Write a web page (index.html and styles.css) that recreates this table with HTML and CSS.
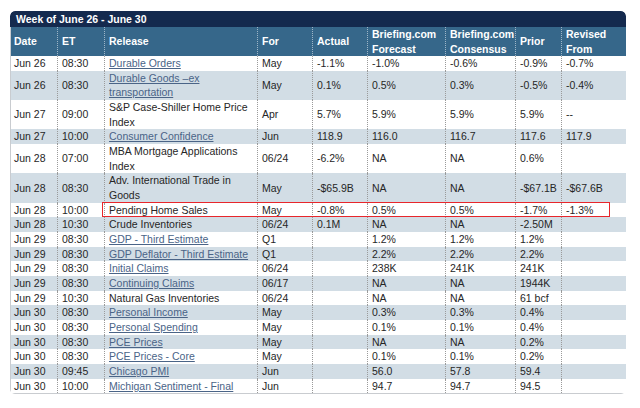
FILE: index.html
```html
<!DOCTYPE html>
<html>
<head>
<meta charset="utf-8">
<link rel="stylesheet" href="styles.css">
</head>
<body>
<div class="panel">
  <div class="title">Week of June 26 - June 30</div>
  <table class="cal">
    <colgroup>
      <col class="c-date"><col class="c-et"><col class="c-rel"><col class="c-for"><col class="c-act"><col class="c-fc"><col class="c-cons"><col class="c-prior"><col class="c-rev">
    </colgroup>
    <thead>
      <tr>
        <th class="first">Date</th><th>ET</th><th>Release</th><th>For</th><th>Actual</th><th>Briefing.com<br>Forecast</th><th>Briefing.com<br>Consensus</th><th>Prior</th><th>Revised<br>From</th>
      </tr>
    </thead>
    <tbody>
      <tr><td class="first">Jun 26</td><td>08:30</td><td><a href="#">Durable Orders</a></td><td>May</td><td>-1.1%</td><td>-1.0%</td><td>-0.6%</td><td>-0.9%</td><td>-0.7%</td></tr>
      <tr class="alt"><td class="first">Jun 26</td><td>08:30</td><td><a href="#">Durable Goods –ex transportation</a></td><td>May</td><td>0.1%</td><td>0.5%</td><td>0.3%</td><td>-0.5%</td><td>-0.4%</td></tr>
      <tr><td class="first">Jun 27</td><td>09:00</td><td>S&amp;P Case-Shiller Home Price Index</td><td>Apr</td><td>5.7%</td><td>5.9%</td><td>5.9%</td><td>5.9%</td><td>--</td></tr>
      <tr class="alt"><td class="first">Jun 27</td><td>10:00</td><td><a href="#">Consumer Confidence</a></td><td>Jun</td><td>118.9</td><td>116.0</td><td>116.7</td><td>117.6</td><td>117.9</td></tr>
      <tr><td class="first">Jun 28</td><td>07:00</td><td>MBA Mortgage Applications Index</td><td>06/24</td><td>-6.2%</td><td>NA</td><td>NA</td><td>0.6%</td><td></td></tr>
      <tr class="alt"><td class="first">Jun 28</td><td>08:30</td><td>Adv. International Trade in Goods</td><td>May</td><td>-$65.9B</td><td>NA</td><td>NA</td><td>-$67.1B</td><td>-$67.6B</td></tr>
      <tr><td class="first">Jun 28</td><td>10:00</td><td>Pending Home Sales</td><td>May</td><td>-0.8%</td><td>0.5%</td><td>0.5%</td><td>-1.7%</td><td>-1.3%</td></tr>
      <tr class="alt"><td class="first">Jun 28</td><td>10:30</td><td>Crude Inventories</td><td>06/24</td><td>0.1M</td><td>NA</td><td>NA</td><td>-2.50M</td><td></td></tr>
      <tr><td class="first">Jun 29</td><td>08:30</td><td><a href="#">GDP - Third Estimate</a></td><td>Q1</td><td></td><td>1.2%</td><td>1.2%</td><td>1.2%</td><td></td></tr>
      <tr class="alt"><td class="first">Jun 29</td><td>08:30</td><td><a href="#">GDP Deflator - Third Estimate</a></td><td>Q1</td><td></td><td>2.2%</td><td>2.2%</td><td>2.2%</td><td></td></tr>
      <tr><td class="first">Jun 29</td><td>08:30</td><td><a href="#">Initial Claims</a></td><td>06/24</td><td></td><td>238K</td><td>241K</td><td>241K</td><td></td></tr>
      <tr class="alt"><td class="first">Jun 29</td><td>08:30</td><td><a href="#">Continuing Claims</a></td><td>06/17</td><td></td><td>NA</td><td>NA</td><td>1944K</td><td></td></tr>
      <tr><td class="first">Jun 29</td><td>10:30</td><td>Natural Gas Inventories</td><td>06/24</td><td></td><td>NA</td><td>NA</td><td>61 bcf</td><td></td></tr>
      <tr class="alt"><td class="first">Jun 30</td><td>08:30</td><td><a href="#">Personal Income</a></td><td>May</td><td></td><td>0.3%</td><td>0.3%</td><td>0.4%</td><td></td></tr>
      <tr><td class="first">Jun 30</td><td>08:30</td><td><a href="#">Personal Spending</a></td><td>May</td><td></td><td>0.1%</td><td>0.1%</td><td>0.4%</td><td></td></tr>
      <tr class="alt"><td class="first">Jun 30</td><td>08:30</td><td><a href="#">PCE Prices</a></td><td>May</td><td></td><td>NA</td><td>NA</td><td>0.2%</td><td></td></tr>
      <tr><td class="first">Jun 30</td><td>08:30</td><td><a href="#">PCE Prices - Core</a></td><td>May</td><td></td><td>0.1%</td><td>0.1%</td><td>0.2%</td><td></td></tr>
      <tr class="alt"><td class="first">Jun 30</td><td>09:45</td><td><a href="#">Chicago PMI</a></td><td>Jun</td><td></td><td>56.0</td><td>57.8</td><td>59.4</td><td></td></tr>
      <tr><td class="first">Jun 30</td><td>10:00</td><td><a href="#">Michigan Sentiment - Final</a></td><td>Jun</td><td></td><td>94.7</td><td>94.7</td><td>94.5</td><td></td></tr>
    </tbody>
  </table>
  <div class="highlight"></div>
</div>
</body>
</html>
```

FILE: styles.css
```css
html, body {
  margin: 0;
  padding: 0;
  background: #ffffff;
}

body {
  padding: 11px 14px 0 10px;
  font-family: "Liberation Sans", Arial, sans-serif;
  font-size: 10.5px;
  color: #262626;
}

.panel {
  position: relative;
  width: 616px;
  border-radius: 5px;
  overflow: hidden;
  background: #ffffff;
}

.title {
  height: 16px;
  line-height: 16px;
  padding-left: 6px;
  background: #142a4e;
  color: #ffffff;
  font-weight: bold;
  border-radius: 5px 5px 0 0;
}

.cal {
  width: 616px;
  table-layout: fixed;
  border-collapse: collapse;
  border-spacing: 0;
  border-left: 1px solid #c9ccd0;
  border-right: 1px solid #c9ccd0;
  border-bottom: 1px solid #c9ccd0;
}

.c-date { width: 47px; }
.c-et { width: 47px; }
.c-rel { width: 153px; }
.c-for { width: 55px; }
.c-act { width: 55px; }
.c-fc { width: 78px; }
.c-cons { width: 70px; }
.c-prior { width: 46px; }
.c-rev { width: 65px; }

.cal th {
  background: #36678a;
  color: #ffffff;
  font-weight: bold;
  text-align: left;
  vertical-align: middle;
  line-height: 14.5px;
  height: 29px;
  padding: 0 2px 0 4px;
  border-left: 1px dotted #9fb6c8;
}

.cal td {
  line-height: 14.67px;
  padding: 0 2px 0 4px;
  vertical-align: middle;
  border-left: 1px dotted #9a9a9a;
}

.cal th.first,
.cal td.first {
  border-left: none;
  padding-left: 3px;
}

.cal tr.alt td {
  background: #d2dde5;
}

.cal a {
  color: #4a6487;
  text-decoration: underline;
}

.highlight {
  position: absolute;
  left: 92px;
  top: 191px;
  width: 508px;
  height: 15px;
  box-sizing: border-box;
  border: 1px solid #e8262b;
  pointer-events: none;
}
```
